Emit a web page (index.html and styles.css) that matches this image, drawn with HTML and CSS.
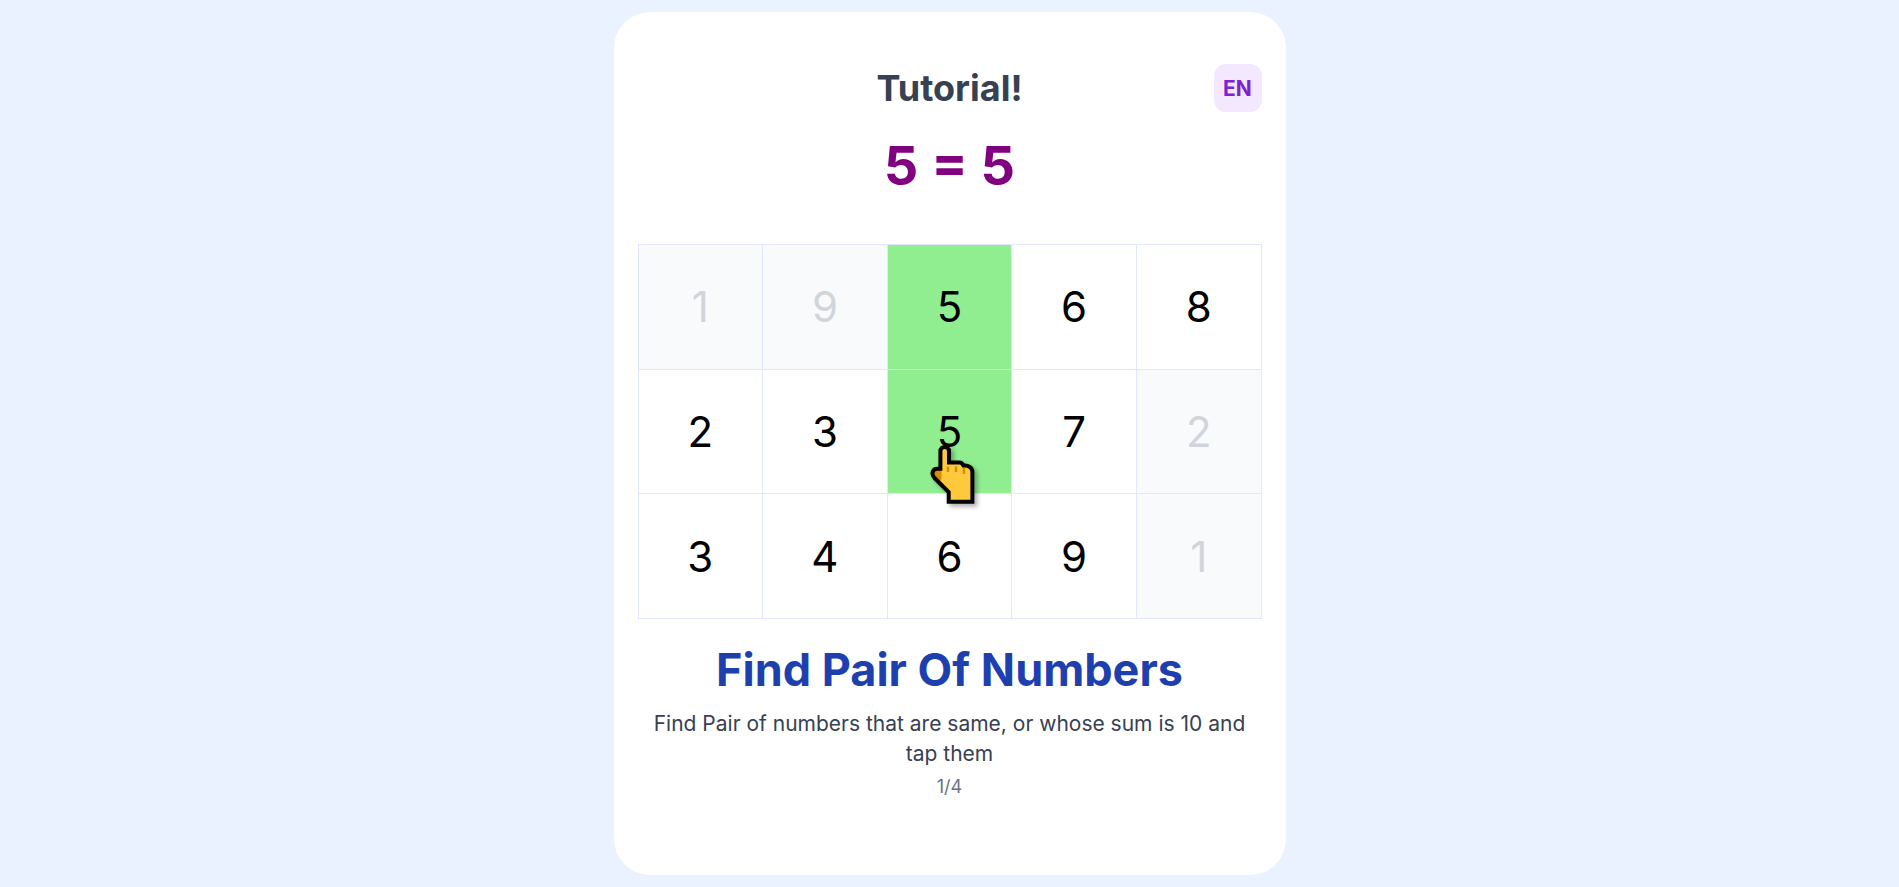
FILE: index.html
```html
<!DOCTYPE html>
<html lang="en">
<head>
<meta charset="utf-8">
<title>Tutorial</title>
<link rel="stylesheet" href="styles.css">
</head>
<body>
<main class="card">
  <header class="header">
    <h1 class="title">Tutorial!</h1>
    <button class="lang" type="button">EN</button>
  </header>
  <p class="equation">5 = 5</p>
  <section class="board">
    <button class="cell used" type="button">1</button>
    <button class="cell used" type="button">9</button>
    <button class="cell match" type="button">5</button>
    <button class="cell" type="button">6</button>
    <button class="cell" type="button">8</button>
    <button class="cell" type="button">2</button>
    <button class="cell" type="button">3</button>
    <button class="cell match" type="button">5
      <svg class="hand" viewBox="0 0 50 64" aria-hidden="true">
        <path d="M10.4 27V9C10.4 3.5 19 3.5 19 9V20.5H29.5C32 20.5 33.5 23.5 33.5 23.5C39 23 42.4 26 42.4 30V59.7H18.7V50L4.5 36C0.5 31.5 3 26.8 7 26.8Z" fill="#ffc83d"/>
        <path d="M4 28C7 26 9.5 26.5 11.5 28.5V37L9.5 39L4 34Z" fill="#d68d00"/>
        <path d="M18 24.5V30M26 24.5V30M34 26V32" fill="none" stroke="#d68d00" stroke-width="2.4"/>
        <path d="M10.4 26.8V9C10.4 3.5 19 3.5 19 9V20.5H29.5C32 20.5 33.5 23.5 33.5 23.5C39 23 42.4 26 42.4 30V59.7H18.7V50L4.5 36C0.5 31.5 3 26.8 7 26.8Z" fill="none" stroke="#000" stroke-width="4"/>
      </svg>
    </button>
    <button class="cell" type="button">7</button>
    <button class="cell used" type="button">2</button>
    <button class="cell" type="button">3</button>
    <button class="cell" type="button">4</button>
    <button class="cell" type="button">6</button>
    <button class="cell" type="button">9</button>
    <button class="cell used" type="button">1</button>
  </section>
  <h2 class="step-title">Find Pair Of Numbers</h2>
  <p class="step-text">Find Pair of numbers that are same, or whose sum is 10 and tap them</p>
  <p class="progress">1/4</p>
</main>
</body>
</html>
```
FILE: styles.css
```css
* { box-sizing: border-box; }
body {
  margin: 0;
  min-height: 100vh;
  padding: 12px;
  display: flex;
  justify-content: center;
  background: #eaf1ff;
  font-family: Inter, "Liberation Sans", sans-serif;
}
h1, h2, p { margin: 0; }
button { border: 0; padding: 0; font-family: inherit; cursor: pointer; }
.card {
  width: 100%;
  max-width: 672px;
  padding: 52px 24px 24px;
  border-radius: 36px;
  background: #fff;
  text-align: center;
}
.header {
  display: grid;
  grid-template-columns: 48px 1fr 48px;
  align-items: center;
}
.title {
  grid-column: 2;
  color: #374151;
  font-size: 36px;
  line-height: 48px;
  font-weight: 700;
}
.lang {
  height: 48px;
  border-radius: 12px;
  background: #f3e8ff;
  color: #7e22ce;
  font-size: 21px;
  font-weight: 700;
}
.equation {
  margin: 12px 0 36px;
  color: purple;
  font-size: 54px;
  line-height: 84px;
  font-weight: 700;
}
.board {
  display: grid;
  grid-template-columns: repeat(5, 1fr);
  gap: 1px;
  padding: 1px;
  background: #e0e7ff;
}
.cell {
  position: relative;
  aspect-ratio: 1;
  background: #fff;
  color: #000;
  font-size: 42px;
  font-weight: 400;
}
.used { background: #f9fafb; color: #d1d5db; }
.match { background: #90ee90; }
.hand {
  position: absolute;
  left: 42px;
  top: 72px;
  width: 50px;
  height: 64px;
  z-index: 1;
  filter: drop-shadow(3px 3px 2px rgba(0, 0, 0, 0.3));
}
.step-title {
  margin-top: 24px;
  color: #1e40af;
  font-size: 45px;
  line-height: 54px;
  font-weight: 700;
}
.step-text {
  margin-top: 12px;
  color: #374151;
  font-size: 21px;
  line-height: 30px;
}
.progress {
  margin-top: 6px;
  color: #6b7280;
  font-size: 18px;
  line-height: 24px;
}
```
